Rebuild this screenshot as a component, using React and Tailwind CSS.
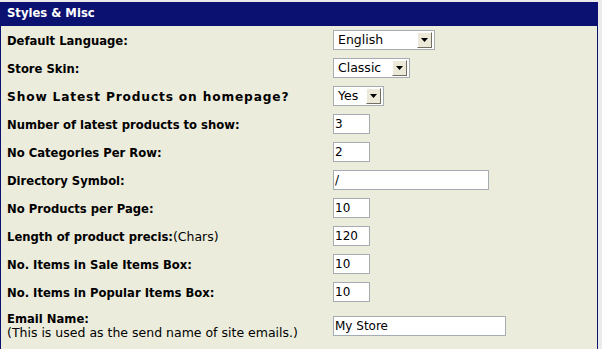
import React from 'react';

const rows = [
    { label: 'Default Language:', kind: 'select', value: 'English', width: 'w-[102px]' },
    { label: 'Store Skin:', kind: 'select', value: 'Classic', width: 'w-[77px]' },
    { label: 'Show Latest Products on homepage?', kind: 'select', value: 'Yes', width: 'w-[51px]', wide: true },
    { label: 'Number of latest products to show:', kind: 'input', value: '3', width: 'w-[37px]' },
    { label: 'No Categories Per Row:', kind: 'input', value: '2', width: 'w-[37px]' },
    { label: 'Directory Symbol:', kind: 'input', value: '/', width: 'w-[156px]' },
    { label: 'No Products per Page:', kind: 'input', value: '10', width: 'w-[37px]' },
    { label: 'Length of product precis:', note: '(Chars)', kind: 'input', value: '120', width: 'w-[37px]' },
    { label: 'No. Items in Sale Items Box:', kind: 'input', value: '10', width: 'w-[37px]' },
    { label: 'No. Items in Popular Items Box:', kind: 'input', value: '10', width: 'w-[37px]' },
];

const FakeSelect = ({ value, width }) => (
    <div className={`${width} h-[20px] bg-white border border-[#a5acb2] flex items-center justify-between pl-[4px] pr-[2px]`}>
        <span className="text-[12.5px] text-black leading-none">{value}</span>
        <span className="w-[15px] h-[16px] bg-[#ece9d8] border-t border-l border-t-white border-l-white border-r border-b border-r-[#716f64] border-b-[#716f64] flex items-center justify-center">
            <svg width="7" height="4" viewBox="0 0 7 4"><path d="M0 0h7L3.5 4z" fill="#000" /></svg>
        </span>
    </div>
);

const FakeInput = ({ value, width }) => (
    <div className={`${width} h-[20px] bg-white border border-[#a5acb2] flex items-center px-[1px]`}>
        <span className="text-[12px] text-black leading-none">{value}</span>
    </div>
);

export default function App() {
    return (
        <div className="w-[602px] h-[349px] bg-[#ebebeb] pt-[2px] overflow-hidden font-['DejaVu_Sans',Verdana,sans-serif]">
            <div className="w-[598px] h-full bg-[#ececdc] border-x border-[#0b1170]">
                <div className="h-[24px] bg-[#0b1170] text-white font-bold text-[11.6px] flex items-center pl-[6px]">
                    Styles &amp; Misc
                </div>
                {rows.map((row, idx) => (
                    <div key={idx} className="h-[28px] flex items-center">
                        <div className="w-[332px] pl-[6px] text-black">
                            <span className={`font-bold ${row.wide ? 'text-[12.2px] tracking-[0.85px]' : 'text-[11.6px]'}`}>{row.label}</span>
                            {row.note && <span className="text-[12.5px]">{row.note}</span>}
                        </div>
                        {row.kind === 'select'
                            ? <FakeSelect value={row.value} width={row.width} />
                            : <FakeInput value={row.value} width={row.width} />}
                    </div>
                ))}
                <div className="h-[40px] flex items-center">
                    <div className="w-[332px] pl-[6px] text-black leading-[14px]">
                        <div className="font-bold text-[11.6px]">Email Name:</div>
                        <div className="text-[12.5px] whitespace-nowrap">(This is used as the send name of site emails.)</div>
                    </div>
                    <FakeInput value="My Store" width="w-[173px]" />
                </div>
            </div>
        </div>
    );
}
